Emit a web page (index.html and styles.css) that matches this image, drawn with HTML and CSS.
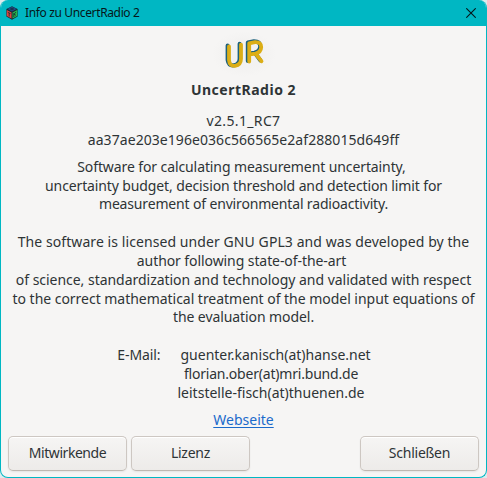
FILE: index.html
```
<!DOCTYPE html>
<html lang="de">
<head>
<meta charset="utf-8">
<title>Info zu UncertRadio 2</title>
<link rel="stylesheet" href="styles.css">
</head>
<body>
<div class="window">
  <header class="titlebar">
    <svg class="app-icon" width="12" height="14" viewBox="0 0 12 14">
      <path d="M6 .3 11.6 3v7.6L6 13.7.4 10.6V3z" fill="#152a32"/>
      <path d="M6 .8 10.6 3 6 5.6 1.4 3z" fill="#214c8c"/>
      <path d="M.8 4 5.5 6.5v6L.8 10z" fill="#e04440"/>
      <path d="M11.2 4 6.5 6.5v6l4.7-2.5z" fill="#25b64c"/>
      <path d="M1.8 6.3 4.5 7.6M3.2 7v3.5M7.8 7v4M10 6 8 8.3l2 1M4 3h4M6 1.8v2.6" fill="none" stroke="#14292f" stroke-width=".8"/>
    </svg>
    <span class="title">Info zu UncertRadio 2</span>
    <svg class="close" width="10" height="10" viewBox="0 0 10 10"><path d="M.3.3 9.7 9.7M9.7.3.3 9.7" stroke="#06171a" stroke-width="1.1"/></svg>
  </header>
  <main class="content">
    <svg class="logo" width="64" height="48" viewBox="0 0 64 48">
      <defs>
        <radialGradient id="halo"><stop offset=".6" stop-color="#f3f2f1"/><stop offset="1" stop-color="#f6f5f4"/></radialGradient>
      </defs>
      <ellipse cx="32" cy="25" rx="32" ry="23" fill="url(#halo)"/>
      <g fill="none" stroke-linecap="round" stroke-linejoin="round">
        <g stroke="#1d617c" stroke-width="4">
          <path d="M15.600 16.600V31Q16.400 37 22.200 36.300 27.800 35 27.600 29.500V14.800"/>
          <path d="M35.800 32V13.400L42 12.200Q48.200 12.200 48.200 17.400 48 22.400 42.500 23.800L37 24.500M42.600 23.500 48.300 31.300"/>
        </g>
        <g stroke="#dcae16" stroke-width="3.800">
          <path d="M17 17.400V31Q17.500 37.400 23 36.800 29 35.800 29 29.700V15.600"/>
          <path d="M37.200 32.600V14.400L43 13.200Q49.200 13 49.200 18.200 49 23.200 43.500 24.600L38 25.300M43.800 25 49.500 32.200"/>
        </g>
      </g>
    </svg>
    <h1 class="name">UncertRadio 2</h1>
    <div class="version">
      <p class="l-version">v2.5.1_RC7</p>
      <p class="l-hash">aa37ae203e196e036c566565e2af288015d649ff</p>
    </div>
    <div class="comments">
      <p class="l-soft">Software for calculating measurement uncertainty,</p>
      <p class="l-budget">uncertainty budget, decision threshold and detection limit for</p>
      <p class="l-measure">measurement of environmental radioactivity.</p>
      <p class="blank"></p>
      <p class="l-license">The software is licensed under GNU GPL3 and was developed by the</p>
      <p class="l-author">author following state-of-the-art</p>
      <p class="l-science">of science, standardization and technology and validated with respect</p>
      <p class="l-correct">to the correct mathematical treatment of the model input equations of</p>
      <p class="l-eval">the evaluation model.</p>
      <p class="blank"></p>
      <p class="l-mail"><span class="label">E-Mail:</span>guenter.kanisch(at)hanse.net</p>
      <p class="l-florian">florian.ober(at)mri.bund.de</p>
      <p class="l-leit">leitstelle-fisch(at)thuenen.de</p>
    </div>
    <a class="website" href="#">Webseite</a>
  </main>
  <footer class="actions">
    <button class="mit">Mitwirkende</button>
    <button class="liz">Lizenz</button>
    <button class="schl">Schließen</button>
  </footer>
</div>
</body>
</html>
```
FILE: styles.css
```
* { box-sizing: border-box; }
body {
  margin: 0;
  background: #dcebed;
  font: 14px/18.85px "Noto Sans", sans-serif;
  color: #2e3436;
}
.window {
  width: 487px;
  height: 478px;
  display: flex;
  flex-direction: column;
  border: 1px solid #00b7c3;
  border-top: 0;
  border-radius: 8px;
  overflow: hidden;
  background: #f6f5f4;
}
.titlebar {
  height: 26px;
  flex: none;
  display: flex;
  align-items: center;
  padding: 0 10px 0 5px;
  background: #00b7c3;
  color: #06171a;
}
.title {
  margin-left: 7px;
  font-size: 12px;
  letter-spacing: -0.36px;
}
.close { margin-left: auto; }
.content {
  flex: 1;
  display: flex;
  flex-direction: column;
  align-items: center;
  padding-top: 3px;
}
.logo { flex: none; display: block; }
p { margin: 0; height: 18.85px; white-space: pre; text-align: center; }
.name { margin: 4px 0 0; font-size: 14px; letter-spacing: 0.5px; height: 19px; }
.version { margin-top: 12px; }
.comments { margin-top: 8px; }
.l-version { letter-spacing: 0.35px; }
.l-hash { letter-spacing: 0.06px; }
.l-soft { padding-right: 4px; letter-spacing: -0.1px; }
.l-budget { letter-spacing: -0.12px; }
.l-measure { letter-spacing: -0.16px; }
.l-license { letter-spacing: 0.08px; }
.l-author { padding-right: 4px; letter-spacing: -0.08px; }
.l-science { letter-spacing: -0.03px; }
.l-correct { letter-spacing: -0.03px; }
.l-eval { letter-spacing: -0.08px; }
.l-mail { padding-left: 1px; }
.l-florian { padding-left: 55px; letter-spacing: -0.2px; }
.l-leit { padding-left: 55px; }
.label { margin-right: 20px; letter-spacing: -0.1px; }
.website {
  margin-top: 8px;
  color: #1b6acb;
  text-underline-offset: 2px;
}
.actions {
  display: flex;
  gap: 4px;
  padding: 0 7px 6px;
}
button {
  width: 119px;
  height: 35px;
  padding: 0 0 1px;
  border: 1px solid #cdc7c2;
  border-bottom-color: #bfb8b1;
  border-radius: 5px;
  background: linear-gradient(#f6f5f4, #edebe9);
  box-shadow: inset 0 1px #fff, 0 1px 2px rgba(0, 0, 0, 0.07);
  font: inherit;
  color: inherit;
}
.mit { letter-spacing: -0.45px; }
.liz { letter-spacing: -0.25px; }
.schl { margin-left: auto; letter-spacing: -0.25px; }
```
